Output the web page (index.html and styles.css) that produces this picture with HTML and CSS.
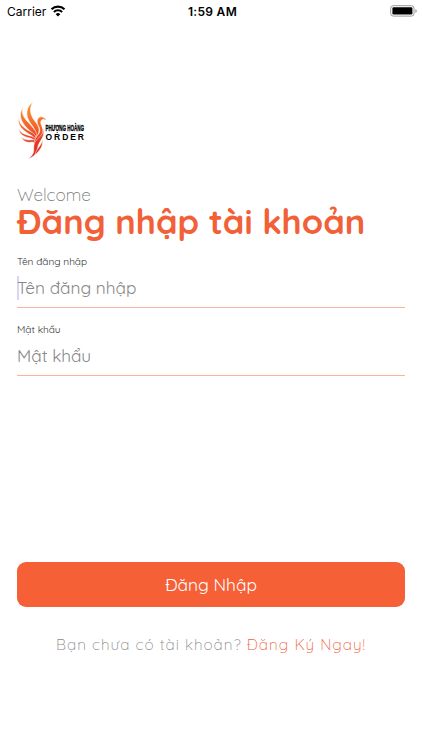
FILE: index.html
```html
<!DOCTYPE html>
<html lang="vi">
<head>
    <meta charset="UTF-8">
    <meta name="viewport" content="width=device-width, initial-scale=1.0">
    <title>Đăng nhập</title>
    <link rel="stylesheet" href="styles.css">
</head>
<body>

    <header class="status-bar">
        <div class="carrier">
            <span>Carrier</span>
            <svg width="16" height="12" viewBox="0 0 16 12">
                <path d="M1.5 4.3a9.2 9.2 0 0 1 13 0M3.9 7a5.8 5.8 0 0 1 8.2 0" fill="none" stroke="#000" stroke-width="2.1"/>
                <path d="M8 11.6L5.7 9.2a3.3 3.3 0 0 1 4.6 0z"/>
            </svg>
        </div>
        <div class="time">1:59 AM</div>
        <svg class="battery" width="28" height="12" viewBox="0 0 28 12">
            <rect x=".7" y=".7" width="23.3" height="10.4" rx="2.6" fill="#fff" stroke="#999"/>
            <rect x="2.4" y="2.3" width="20" height="7.2" rx="1.2"/>
            <path d="M25.4 4v4q1.4-.7 1.4-2t-1.4-2z" fill="#999"/>
        </svg>
    </header>

    <main class="container">
        <svg class="logo" width="72" height="60" viewBox="0 0 72 60">
            <defs>
                <linearGradient id="fire" x1="0" y1="0" x2="0" y2="60" gradientUnits="userSpaceOnUse">
                    <stop offset="0" stop-color="#f99a32"/>
                    <stop offset=".4" stop-color="#f4692b"/>
                    <stop offset=".65" stop-color="#e63a22"/>
                    <stop offset="1" stop-color="#dc251c"/>
                </linearGradient>
            </defs>
            <g fill="url(#fire)" stroke="#fff" stroke-width=".5">
                <!-- canh -->
                <path d="M16 1C10 5 8 12 12 20c3 5 7 8 7 15l2-1c3-7-1-11-4-15-4-6-5-12-1-18z"/>
                <path d="M6 6C1 14 4 21 10 27c4 4 7 6 8 10l2-3c-1-5-5-8-8-12C7 17 4 13 6 6z"/>
                <path d="M2 16c-2 9 4 13 10 17 4 2 6 4 6 7l1-4c-2-5-6-5-10-8C5 25 2 22 2 16z"/>
                <path d="M2 27c0 7 6 9 11 10 3 1 5 2 5 5l1-4c-3-3-6-3-9-4-4-1-7-3-8-7z"/>
                <path d="M4 36c3 5 7 6 11 5 2 0 3 1 3 4l2-4c-2-3-5-2-8-2s-6-1-8-3z"/>
                <!-- than va duoi -->
                <path d="M25 16c-4-1-6 4-4 8 3 5 2 8-1 11-3 4-3 7-2 10 2-6 9-8 8-16-1-5-3-6-2-9 1-2 3-2 4-1h1c0-1-2-3-4-3z"/>
                <path d="M26 26c2 9-8 11-9 18-1 5 2 8-6 14 10-4 9-8 10-13 2-6 8-10 5-19z"/>
                <path d="M25 38c1 6-6 9-7 16 5-5 9-9 7-16z"/>
            </g>
            <text class="logo-name" x="28.5" y="29.8" textLength="38.5" lengthAdjust="spacingAndGlyphs">PHƯỢNG HOÀNG</text>
            <text class="logo-order" x="28.5" y="38.8" textLength="38.5">ORDER</text>
        </svg>

        <p class="welcome">Welcome</p>
        <h1>Đăng nhập tài khoản</h1>

        <form>
            <div class="field">
                <label for="username">Tên đăng nhập</label>
                <input class="active" type="text" id="username" placeholder="Tên đăng nhập">
            </div>
            <div class="field">
                <label for="password">Mật khẩu</label>
                <input type="password" id="password" placeholder="Mật khẩu">
            </div>
            <button type="submit">Đăng Nhập</button>
        </form>

        <p class="register">Bạn chưa có tài khoản? <a href="#">Đăng Ký Ngay!</a></p>
    </main>

</body>
</html>
```

FILE: styles.css
```css
* {
    margin: 0;
    padding: 0;
    box-sizing: border-box;
}

body {
    background: #fff;
    height: 750px;
    overflow: hidden;
    font-family: Quicksand, Inter, sans-serif;
}

.status-bar {
    display: grid;
    grid-template-columns: 1fr auto 1fr;
    align-items: center;
    height: 22px;
    padding: 0 4px 0 7px;
    font-family: Inter, sans-serif;
    font-size: 12px;
}

.carrier {
    display: flex;
    align-items: center;
    gap: 4px;
}

.time {
    font-weight: 600;
    letter-spacing: 0.3px;
}

.battery {
    justify-self: end;
}

.container {
    padding: 79px 17px 0;
}

.logo {
    display: block;
    overflow: visible;
}

.logo-name {
    font: bold 8.5px "Liberation Sans", sans-serif;
    stroke: #000;
    stroke-width: 0.3px;
}

.logo-order {
    font: bold 8.5px "Liberation Sans", sans-serif;
}

.welcome {
    margin-top: 23px;
    line-height: 22px;
    font-size: 17.2px;
    font-weight: 300;
    color: #777;
}

h1 {
    margin-top: -1px;
    line-height: 34px;
    font-size: 34.4px;
    font-weight: 700;
    white-space: nowrap;
    color: #f26038;
}

form {
    padding-top: 15px;
}

.field {
    height: 68px;
}

label {
    display: block;
    line-height: 15px;
    font-size: 10.1px;
    color: #333;
}

input {
    display: block;
    width: 100%;
    height: 39px;
    padding-bottom: 2px;
    border: none;
    border-bottom: 1px solid #f9b596;
    background: none;
    outline: none;
    font: inherit;
    font-size: 17.2px;
    font-weight: 400;
}

/* con tro nhap lieu */
.active {
    background: linear-gradient(#d5d8f5, #d5d8f5) 0 7px / 2px 24px no-repeat;
}

input::placeholder {
    color: #888;
}

button {
    display: block;
    width: 100%;
    height: 45px;
    margin-top: 172px;
    border: none;
    border-radius: 9px;
    background: #f56036;
    color: #fff;
    font: inherit;
    font-size: 17.3px;
    font-weight: 400;
}

.register {
    margin-top: 27px;
    line-height: 22px;
    text-align: center;
    white-space: nowrap;
    font-size: 15.3px;
    font-weight: 300;
    letter-spacing: 1px;
    color: #888;
}

.register a {
    color: #f26038;
    text-decoration: none;
}
```
